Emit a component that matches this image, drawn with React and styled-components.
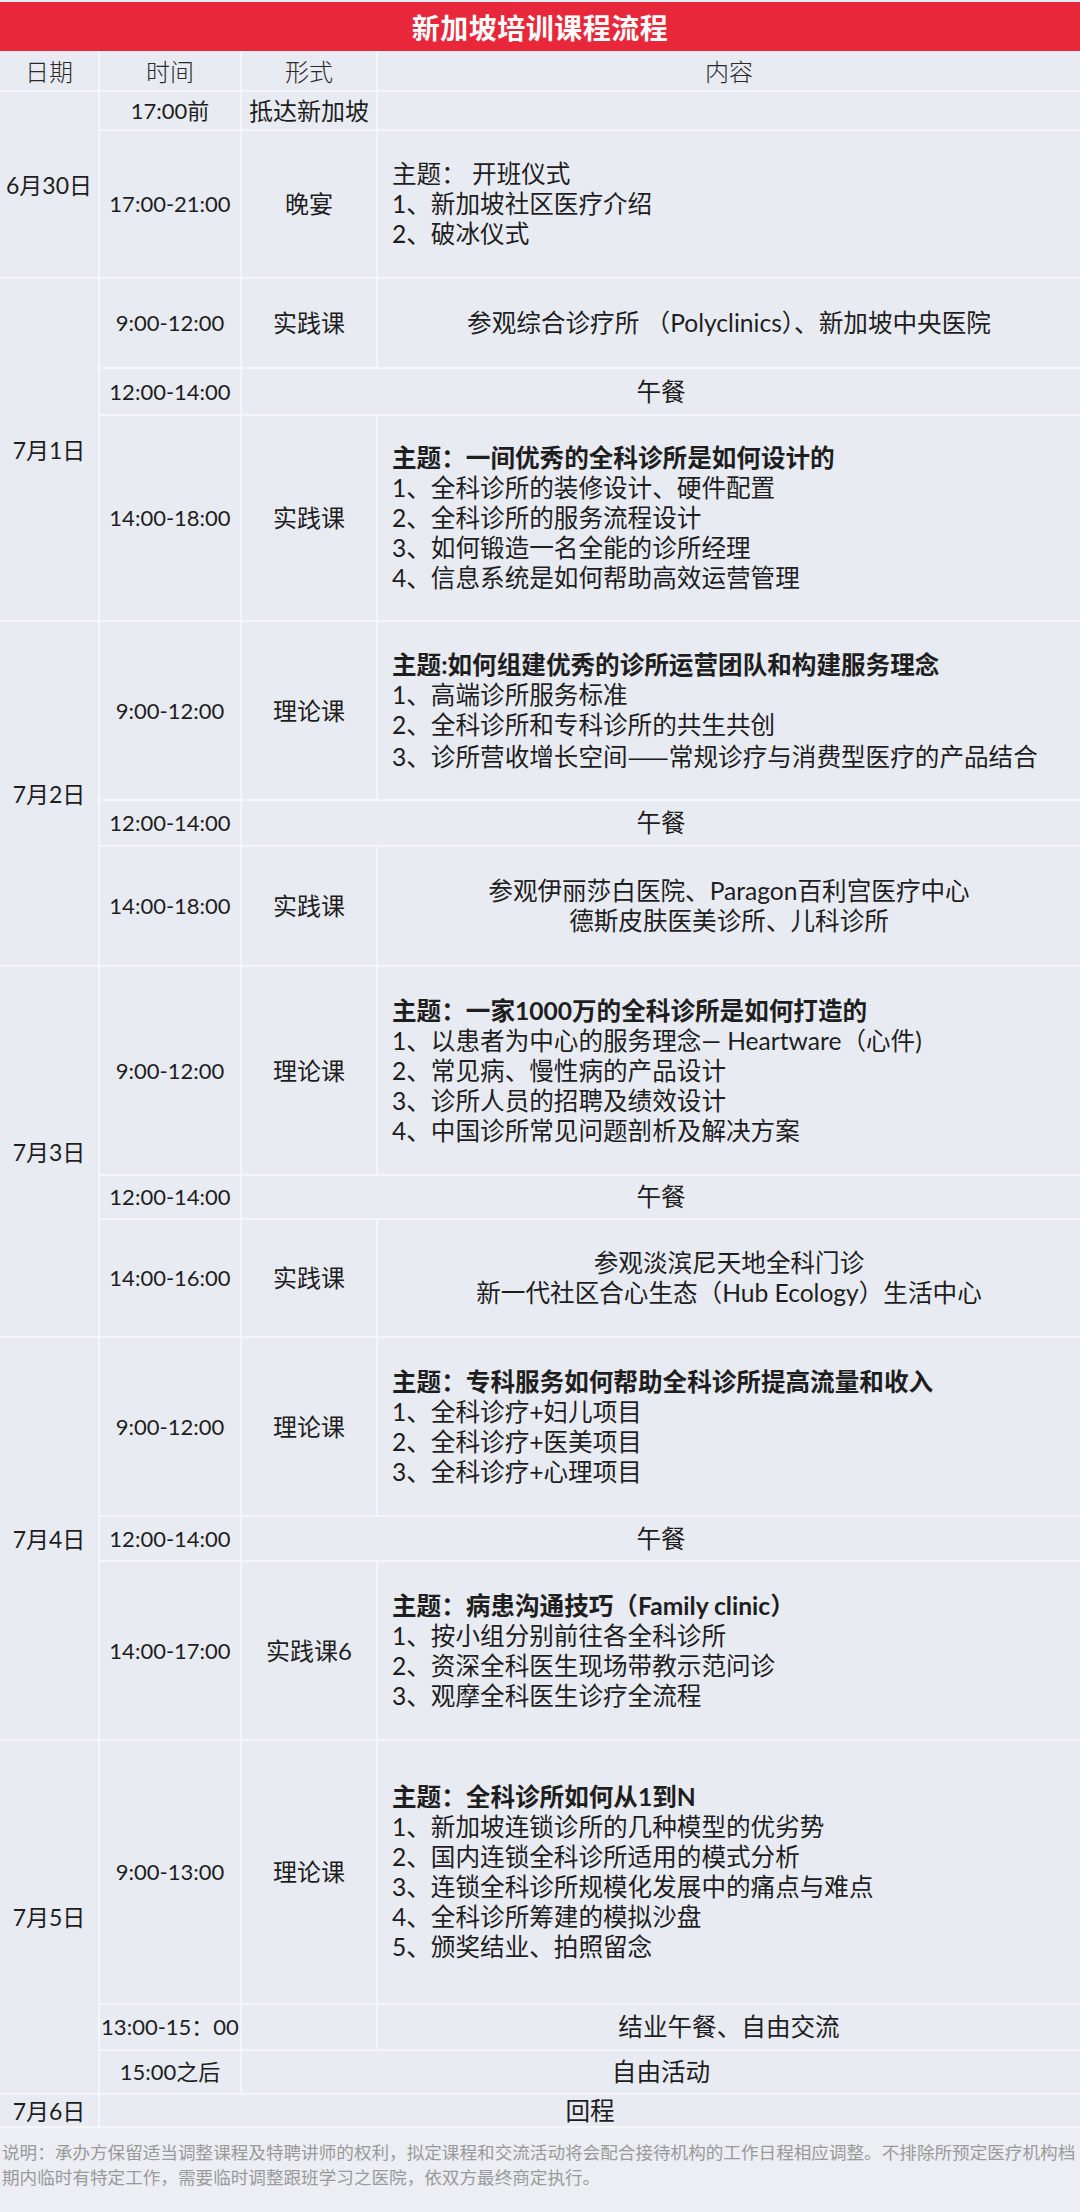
import React from "react";
import styled, { createGlobalStyle } from "styled-components";

const Global = createGlobalStyle`
  html, body { margin: 0; padding: 0; background: #eceef4; }
  body { font-family: Lato, "Noto Sans CJK SC", sans-serif; color: #1e1e1e; }
  * { box-sizing: border-box; }
`;

const Page = styled.div`
  width: 1080px;
  height: 2212px;
  background: #eceef4;
  display: flex;
  flex-direction: column;
  padding-top: 2px;
`;

const TitleBar = styled.div`
  height: 49px;
  background: #e8283a;
  color: #fff;
  font-family: "Noto Sans CJK SC", sans-serif;
  font-weight: 700;
  font-size: 28px;
  display: flex;
  align-items: center;
  justify-content: center;
  letter-spacing: 0.5px;
`;

const Table = styled.div`
  display: grid;
  grid-template-columns: 98px 140px 134px 1fr;
  grid-template-rows: ${(p) => p.$rows.map((h) => `${h - 2}px`).join(" ")};
  gap: 2px;
  background: #f5f6fa;
  padding-bottom: 2px;
`;

const Cell = styled.div`
  background: #e9ebf3;
  display: flex;
  align-items: center;
  justify-content: center;
  text-align: center;
  font-family: Lato, "Noto Sans CJK SC", sans-serif;
  font-size: 24px;
  line-height: 30px;
  color: #1e1e1e;
  grid-row: ${(p) => (p.$rowSpan ? `span ${p.$rowSpan}` : "auto")};
  grid-column: ${(p) => (p.$colSpan ? `span ${p.$colSpan}` : "auto")};
`;

const HeadCell = styled(Cell)`
  font-family: "Noto Sans CJK SC", sans-serif;
  font-weight: 300;
  color: #2a2a2a;
`;

const DateCell = styled(Cell)`
  font-size: 23px;
`;

const TimeCell = styled(Cell)`
  font-size: 22px;
  white-space: nowrap;
`;

const ContentCell = styled(Cell)`
  font-size: 24.6px;
  justify-content: ${(p) => (p.$center ? "center" : "flex-start")};
  text-align: ${(p) => (p.$center ? "center" : "left")};
  padding-left: ${(p) => (p.$center ? "0" : "14px")};
`;

const Lines = styled.div`
  display: flex;
  flex-direction: column;
`;

const Topic = styled.div`
  font-weight: ${(p) => (p.$bold ? 700 : 400)};
`;

const Dash = styled.span`
  font-family: "Noto Sans CJK SC", sans-serif;
`;

const Note = styled.div`
  flex: 1;
  padding: 11px 0 0 2px;
  font-family: "Noto Sans CJK SC", sans-serif;
  font-size: 17.6px;
  line-height: 25px;
  color: #9a9a9a;
  white-space: nowrap;
  overflow: hidden;
`;

const NoteLine = styled.div``;

const rows = [41, 39, 148, 90, 47, 206, 179, 46, 120, 209, 44, 118, 179, 45, 179, 264, 46, 44, 33];

function Block({ topic, bold, items }) {
  return (
    <Lines>
      {topic && <Topic $bold={bold}>{topic}</Topic>}
      {items.map((t, i) => (
        <div key={i}>{t}</div>
      ))}
    </Lines>
  );
}

export default function App() {
  return (
    <>
      <Global />
      <Page>
        <TitleBar>新加坡培训课程流程</TitleBar>
        <Table $rows={rows}>
          <HeadCell>日期</HeadCell>
          <HeadCell>时间</HeadCell>
          <HeadCell>形式</HeadCell>
          <HeadCell>内容</HeadCell>

          <DateCell $rowSpan={2}>6月30日</DateCell>
          <TimeCell>17:00前</TimeCell>
          <Cell>抵达新加坡</Cell>
          <ContentCell />
          <TimeCell>17:00-21:00</TimeCell>
          <Cell>晚宴</Cell>
          <ContentCell>
            <Block topic="主题：  开班仪式" items={["1、新加坡社区医疗介绍", "2、破冰仪式"]} />
          </ContentCell>

          <DateCell $rowSpan={3}>7月1日</DateCell>
          <TimeCell>9:00-12:00</TimeCell>
          <Cell>实践课</Cell>
          <ContentCell $center>参观综合诊疗所 （Polyclinics）、新加坡中央医院</ContentCell>
          <TimeCell>12:00-14:00</TimeCell>
          <ContentCell $center $colSpan={2}>午餐</ContentCell>
          <TimeCell>14:00-18:00</TimeCell>
          <Cell>实践课</Cell>
          <ContentCell>
            <Block
              bold
              topic="主题：一间优秀的全科诊所是如何设计的"
              items={[
                "1、全科诊所的装修设计、硬件配置",
                "2、全科诊所的服务流程设计",
                "3、如何锻造一名全能的诊所经理",
                "4、信息系统是如何帮助高效运营管理",
              ]}
            />
          </ContentCell>

          <DateCell $rowSpan={3}>7月2日</DateCell>
          <TimeCell>9:00-12:00</TimeCell>
          <Cell>理论课</Cell>
          <ContentCell>
            <Block
              bold
              topic="主题:如何组建优秀的诊所运营团队和构建服务理念"
              items={[
                "1、高端诊所服务标准",
                "2、全科诊所和专科诊所的共生共创",
                <>
                  3、诊所营收增长空间<Dash>——</Dash>常规诊疗与消费型医疗的产品结合
                </>,
              ]}
            />
          </ContentCell>
          <TimeCell>12:00-14:00</TimeCell>
          <ContentCell $center $colSpan={2}>午餐</ContentCell>
          <TimeCell>14:00-18:00</TimeCell>
          <Cell>实践课</Cell>
          <ContentCell $center>
            <Lines>
              <div>参观伊丽莎白医院、Paragon百利宫医疗中心</div>
              <div>德斯皮肤医美诊所、儿科诊所</div>
            </Lines>
          </ContentCell>

          <DateCell $rowSpan={3}>7月3日</DateCell>
          <TimeCell>9:00-12:00</TimeCell>
          <Cell>理论课</Cell>
          <ContentCell>
            <Block
              bold
              topic="主题：一家1000万的全科诊所是如何打造的"
              items={[
                "1、以患者为中心的服务理念— Heartware（心件)",
                "2、常见病、慢性病的产品设计",
                "3、诊所人员的招聘及绩效设计",
                "4、中国诊所常见问题剖析及解决方案",
              ]}
            />
          </ContentCell>
          <TimeCell>12:00-14:00</TimeCell>
          <ContentCell $center $colSpan={2}>午餐</ContentCell>
          <TimeCell>14:00-16:00</TimeCell>
          <Cell>实践课</Cell>
          <ContentCell $center>
            <Lines>
              <div>参观淡滨尼天地全科门诊</div>
              <div>新一代社区合心生态（Hub Ecology）生活中心</div>
            </Lines>
          </ContentCell>

          <DateCell $rowSpan={3}>7月4日</DateCell>
          <TimeCell>9:00-12:00</TimeCell>
          <Cell>理论课</Cell>
          <ContentCell>
            <Block
              bold
              topic="主题：专科服务如何帮助全科诊所提高流量和收入"
              items={["1、全科诊疗+妇儿项目", "2、全科诊疗+医美项目", "3、全科诊疗+心理项目"]}
            />
          </ContentCell>
          <TimeCell>12:00-14:00</TimeCell>
          <ContentCell $center $colSpan={2}>午餐</ContentCell>
          <TimeCell>14:00-17:00</TimeCell>
          <Cell>实践课6</Cell>
          <ContentCell>
            <Block
              bold
              topic="主题：病患沟通技巧（Family clinic）"
              items={["1、按小组分别前往各全科诊所", "2、资深全科医生现场带教示范问诊", "3、观摩全科医生诊疗全流程"]}
            />
          </ContentCell>

          <DateCell $rowSpan={3}>7月5日</DateCell>
          <TimeCell>9:00-13:00</TimeCell>
          <Cell>理论课</Cell>
          <ContentCell>
            <Block
              bold
              topic="主题：全科诊所如何从1到N"
              items={[
                "1、新加坡连锁诊所的几种模型的优劣势",
                "2、国内连锁全科诊所适用的模式分析",
                "3、连锁全科诊所规模化发展中的痛点与难点",
                "4、全科诊所筹建的模拟沙盘",
                "5、颁奖结业、拍照留念",
              ]}
            />
          </ContentCell>
          <TimeCell>13:00-15：00</TimeCell>
          <Cell />
          <ContentCell $center>结业午餐、自由交流</ContentCell>
          <TimeCell>15:00之后</TimeCell>
          <ContentCell $center $colSpan={2}>自由活动</ContentCell>

          <DateCell>7月6日</DateCell>
          <ContentCell $center $colSpan={3}>回程</ContentCell>
        </Table>
        <Note>
          <NoteLine>说明：承办方保留适当调整课程及特聘讲师的权利，拟定课程和交流活动将会配合接待机构的工作日程相应调整。不排除所预定医疗机构档</NoteLine>
          <NoteLine>期内临时有特定工作，需要临时调整跟班学习之医院，依双方最终商定执行。</NoteLine>
        </Note>
      </Page>
    </>
  );
}
